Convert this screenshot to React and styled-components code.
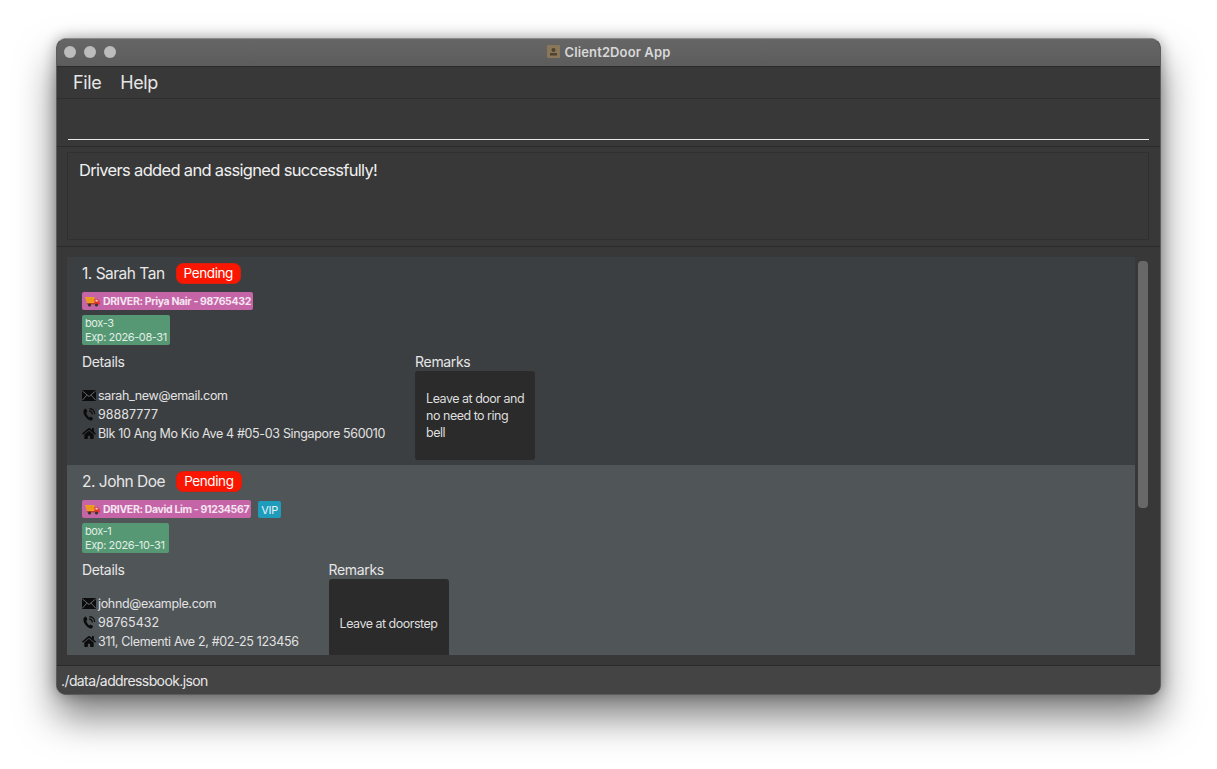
import React from 'react'
import styled, { createGlobalStyle } from 'styled-components'
import { FaHome } from 'react-icons/fa'

const Global = createGlobalStyle`
  html, body { margin: 0; padding: 0; background: #fff; }
  body { font-family: Inter, "Liberation Sans", sans-serif; overflow: hidden; }
  * { box-sizing: border-box; }
`

const Page = styled.div`
  width: 1217px;
  height: 769px;
  padding: 38px 56px 74px;
`
const Window = styled.div`
  height: 657px;
  display: flex;
  flex-direction: column;
  border-radius: 10px;
  overflow: hidden;
  background: #383838;
  box-shadow: 0 22px 38px rgba(0, 0, 0, 0.5), 0 0 14px rgba(0, 0, 0, 0.32);
  border: 1px solid #5c5c5c;
  border-top-color: #8a8a8a;
`
const TitleBar = styled.div`
  height: 28px;
  flex: none;
  position: relative;
  display: flex;
  align-items: center;
  justify-content: center;
  gap: 5px;
  padding-bottom: 2px;
  background: linear-gradient(#666, #5c5c5c);
  border-bottom: 1px solid #2a2a2a;
`
const Lights = styled.div`
  position: absolute;
  left: 7px;
  top: 7px;
  display: flex;
  gap: 8px;
`
const Light = styled.span`
  width: 12px;
  height: 12px;
  border-radius: 50%;
  background: #bcbcbc;
`
const AppIcon = styled.svg`
  width: 13px;
  height: 13px;
`
const Title = styled.span`
  font-size: 13px;
  font-weight: 600;
  letter-spacing: 0.12px;
  color: #d8d8d8;
`
const MenuBar = styled.div`
  height: 32px;
  flex: none;
  display: flex;
  gap: 19px;
  align-items: center;
  padding: 0 16px 1px;
  background: #383838;
  border-bottom: 1px solid #2e2e2e;
`
const MenuItem = styled.span`
  font-size: 18px;
  letter-spacing: -0.4px;
  color: #e6e6e6;
`
const CommandArea = styled.div`
  height: 48px;
  flex: none;
  padding: 0 11px;
  border-bottom: 1px solid #2a2a2a;
`
const CommandInput = styled.div`
  height: 41px;
  border-bottom: 1px solid #e8e8e8;
`
const ResultArea = styled.div`
  height: 100px;
  flex: none;
  padding: 5px 11px 6px 10px;
  border-bottom: 1px solid #2a2a2a;
`
const ResultBox = styled.div`
  height: 88px;
  padding: 6px 11px;
  border: 1px solid #303030;
  font-size: 16.5px;
  line-height: 22px;
  letter-spacing: -0.68px;
  color: #f0f0f0;
`
const ListArea = styled.div`
  flex: 1;
  min-height: 0;
  display: flex;
  gap: 3px;
  padding: 10px 12px 10px 10px;
  border-bottom: 1px solid #2a2a2a;
`
const List = styled.div`
  flex: 1;
  min-width: 0;
  overflow: hidden;
`
const Card = styled.div`
  height: 208px;
  padding: 5px 15px 0;
  background: ${({ $alt }) => ($alt ? '#505558' : '#3c3f41')};
`
const NameRow = styled.div`
  display: flex;
  align-items: center;
  gap: 11px;
  height: 22px;
`
const Name = styled.span`
  font-size: 15.5px;
  letter-spacing: -0.5px;
  color: #e8e8e8;
`
const Status = styled.span`
  height: 21px;
  padding: 0 7px;
  display: flex;
  align-items: center;
  border-radius: 7px;
  background: #fb1600;
  border: 1px solid #d81e0c;
  font-size: 13.5px;
  letter-spacing: -0.4px;
  color: #fff;
`
const TagRow = styled.div`
  display: flex;
  gap: 7px;
  margin-top: 8px;
`
const DriverTag = styled.span`
  height: 18px;
  display: flex;
  align-items: center;
  gap: 3px;
  padding: 0 2px 0 3px;
  border-radius: 2px;
  background: #c565a8;
  font-size: 10.5px;
  font-weight: 700;
  letter-spacing: -0.35px;
  color: #f4e6f0;
  white-space: nowrap;
`
const VipTag = styled.span`
  height: 17px;
  margin-top: 1px;
  display: flex;
  align-items: center;
  padding: 0 3px;
  border-radius: 2px;
  background: #1f9bbb;
  font-size: 11px;
  letter-spacing: -0.2px;
  color: #e4f4f8;
`
const BoxTag = styled.div`
  width: ${({ $w }) => $w}px;
  height: 30px;
  margin-top: 5px;
  padding: 1px 3px;
  border-radius: 2px;
  background: #559873;
  font-size: 11px;
  line-height: 14px;
  letter-spacing: -0.4px;
  color: #e2efe7;
  white-space: nowrap;
`
const Columns = styled.div`
  display: flex;
  gap: 30px;
  margin-top: 8px;
`
const Details = styled.div`
  display: flex;
  flex-direction: column;
`
const SectionLabel = styled.div`
  font-size: 14px;
  line-height: 18px;
  letter-spacing: -0.35px;
  color: #e6e6e6;
`
const DetailLines = styled.div`
  margin-top: 15px;
  display: flex;
  flex-direction: column;
`
const DetailLine = styled.div`
  height: 19px;
  display: flex;
  align-items: center;
  gap: 2px;
  font-size: 12.5px;
  letter-spacing: ${({ $digits }) => ($digits ? '0' : '-0.34px')};
  color: #e2e2e2;
  white-space: nowrap;
`
const LineIcon = styled.span`
  width: 14px;
  height: 14px;
  display: flex;
  align-items: center;
  justify-content: center;
  color: #0c0c0c;
  flex: none;
`
const RemarksColumn = styled.div`
  display: flex;
  flex-direction: column;
`
const RemarksBox = styled.div`
  width: 120px;
  height: 89px;
  display: flex;
  align-items: center;
  padding: 0 8px 0 11px;
  border-radius: 3px;
  background: #2b2b2b;
  font-size: 12.5px;
  line-height: 17px;
  letter-spacing: -0.5px;
  color: #dedede;
`
const ScrollTrack = styled.div`
  width: 10px;
  flex: none;
  padding-top: 4px;
`
const ScrollThumb = styled.div`
  height: 247px;
  border-radius: 4px;
  background: #686868;
`
const StatusBar = styled.div`
  height: 28px;
  flex: none;
  display: flex;
  align-items: center;
  padding: 1px 0 0 4px;
  background: #444;
  font-size: 14px;
  letter-spacing: -0.6px;
  color: #e8e8e8;
`

const MailIcon = () => (
  <svg width="14" height="11" viewBox="0 0 14 11">
    <rect width="14" height="11" rx="1" fill="#0c0c0c" />
    <path d="M0.5 1 L7 6.5 L13.5 1 M0.5 10 L5 5 M13.5 10 L9 5" stroke="#7c8084" strokeWidth="0.8" fill="none" />
  </svg>
)

const PhoneIcon = () => (
  <svg width="15" height="15" viewBox="0 0 15 15" fill="none">
    <path
      d="M4.2 1.2 L5.8 4.4 L4.6 5.6 C4.8 7.4 6.2 9.6 7.8 10.6 L9.2 9.6 L12 11.6 L10.8 13.6 C9.6 14.4 7.6 13.8 5.6 12 C2.8 9.6 1 6.2 1.6 3.6 C2 2.4 3 1.6 4.2 1.2 Z"
      fill="#0c0c0c"
    />
    <path d="M7.6 3.6 C9.6 3.8 11 5.2 11.2 7.4 M8 1.2 C11 1.4 13.4 3.8 13.6 7" stroke="#0c0c0c" strokeWidth="1.2" />
  </svg>
)

const TruckIcon = () => (
  <svg width="15" height="12" viewBox="0 0 15 12">
    <path d="M0 2 H9.5 V8 H2 Z" fill="#f0a020" />
    <path d="M1 4 H9.5 M1.6 6 H9.5" stroke="#d98518" strokeWidth="0.5" />
    <path d="M9.5 4 H12.5 L14.8 7 V9.5 H9.5 Z" fill="#e5352b" />
    <path d="M10.5 4.8 H12 L13.2 6.6 H10.5 Z" fill="#f6d9c8" />
    <rect x="2" y="8" width="8" height="1.5" fill="#b5452a" />
    <circle cx="4.5" cy="10" r="1.6" fill="#333" />
    <circle cx="11.5" cy="10" r="1.6" fill="#333" />
  </svg>
)

const customers = [
  {
    name: '1. Sarah Tan',
    driver: 'DRIVER: Priya Nair - 98765432',
    box: 'box-3',
    exp: 'Exp: 2026-08-31',
    boxWidth: 88,
    email: 'sarah_new@email.com',
    phone: '98887777',
    address: 'Blk 10 Ang Mo Kio Ave 4 #05-03 Singapore 560010',
    remarks: 'Leave at door and no need to ring bell',
  },
  {
    name: '2. John Doe',
    driver: 'DRIVER: David Lim - 91234567',
    vip: true,
    box: 'box-1',
    exp: 'Exp: 2026-10-31',
    boxWidth: 87,
    email: 'johnd@example.com',
    phone: '98765432',
    address: '311, Clementi Ave 2, #02-25 123456',
    remarks: 'Leave at doorstep',
    alt: true,
  },
]

const CustomerCard = ({ customer }) => (
  <Card $alt={customer.alt}>
    <NameRow>
      <Name>{customer.name}</Name>
      <Status>Pending</Status>
    </NameRow>
    <TagRow>
      <DriverTag>
        <TruckIcon />
        {customer.driver}
      </DriverTag>
      {customer.vip && <VipTag>VIP</VipTag>}
    </TagRow>
    <BoxTag $w={customer.boxWidth}>
      {customer.box}
      <br />
      {customer.exp}
    </BoxTag>
    <Columns>
      <Details>
        <SectionLabel>Details</SectionLabel>
        <DetailLines>
          <DetailLine>
            <LineIcon><MailIcon /></LineIcon>
            {customer.email}
          </DetailLine>
          <DetailLine $digits>
            <LineIcon><PhoneIcon /></LineIcon>
            {customer.phone}
          </DetailLine>
          <DetailLine>
            <LineIcon><FaHome size={15} /></LineIcon>
            {customer.address}
          </DetailLine>
        </DetailLines>
      </Details>
      <RemarksColumn>
        <SectionLabel>Remarks</SectionLabel>
        <RemarksBox>{customer.remarks}</RemarksBox>
      </RemarksColumn>
    </Columns>
  </Card>
)

export default function App() {
  return (
    <Page>
      <Global />
      <Window>
        <TitleBar>
          <Lights>
            <Light />
            <Light />
            <Light />
          </Lights>
          <AppIcon viewBox="0 0 13 13">
            <rect width="13" height="13" rx="1" fill="#8a7658" />
            <circle cx="6.5" cy="5" r="2" fill="#4e4232" />
            <rect x="3" y="8" width="7" height="2.5" fill="#4e4232" />
          </AppIcon>
          <Title>Client2Door App</Title>
        </TitleBar>
        <MenuBar>
          <MenuItem>File</MenuItem>
          <MenuItem>Help</MenuItem>
        </MenuBar>
        <CommandArea>
          <CommandInput />
        </CommandArea>
        <ResultArea>
          <ResultBox>Drivers added and assigned successfully!</ResultBox>
        </ResultArea>
        <ListArea>
          <List>
            {customers.map((c) => (
              <CustomerCard key={c.name} customer={c} />
            ))}
          </List>
          <ScrollTrack>
            <ScrollThumb />
          </ScrollTrack>
        </ListArea>
        <StatusBar>./data/addressbook.json</StatusBar>
      </Window>
    </Page>
  )
}
